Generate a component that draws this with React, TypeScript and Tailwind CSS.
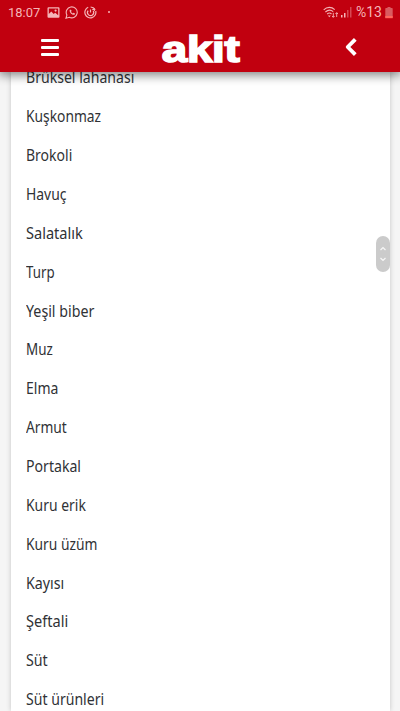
const items = [
  { label: "Brüksel lahanası", scale: "scale-x-[0.88]" },
  { label: "Kuşkonmaz", scale: "scale-x-[0.862]" },
  { label: "Brokoli", scale: "scale-x-[0.875]" },
  { label: "Havuç", scale: "scale-x-[0.87]" },
  { label: "Salatalık", scale: "scale-x-[0.91]" },
  { label: "Turp", scale: "scale-x-[0.83]" },
  { label: "Yeşil biber", scale: "scale-x-[0.89]" },
  { label: "Muz", scale: "scale-x-[0.84]" },
  { label: "Elma", scale: "scale-x-[0.875]" },
  { label: "Armut", scale: "scale-x-[0.86]" },
  { label: "Portakal", scale: "scale-x-[0.882]" },
  { label: "Kuru erik", scale: "scale-x-[0.87]" },
  { label: "Kuru üzüm", scale: "scale-x-[0.864]" },
  { label: "Kayısı", scale: "scale-x-[0.89]" },
  { label: "Şeftali", scale: "scale-x-[0.91]" },
  { label: "Süt", scale: "scale-x-[0.89]" },
  { label: "Süt ürünleri", scale: "scale-x-[0.88]" },
];

function LeftStatus() {
  return (
    <div className="flex h-6 items-center text-[#f5b5b8]">
      <span className="w-[39px] font-['Roboto',sans-serif] text-[13.5px] leading-6 whitespace-nowrap"><span className="inline-block origin-left scale-x-[0.96]">18:07</span></span>
      {/* gallery */}
      <svg className="h-[13px] w-[13px]" viewBox="0 0 13 13">
        <path fillRule="evenodd" fill="currentColor" d="M1.5 1.300h10q1 0 1 1v8.400q0 1-1 1h-10q-1 0-1-1V2.300q0-1 1-1ZM1.800 2.500v5.500l2.500-2.400L6.700 8l1.500-1.300 3 2.600V2.500ZM8.600 3.500a1.100 1.100 0 1 1 0 2.200 1.100 1.100 0 0 1 0-2.200Z" />
      </svg>
      {/* WhatsApp */}
      <svg className="ml-[5px] h-[13px] w-[14px]" viewBox="0 0 14 13" fill="none" stroke="currentColor">
        <path d="M1 12.200 1.900 9A5.500 5.500 0 1 1 4.300 11.300Z" strokeWidth="1.1" />
        <path d="M4.900 3.700c-1.300 1.800 2.200 5.800 4.400 5 .8-.4.8-1 .6-1.300L8.600 6.800l-.8.8C6.900 7.200 6.300 6.500 6 5.800l.6-.8L6 3.700Z" fill="currentColor" stroke="none" />
      </svg>
      {/* call history */}
      <svg className="ml-[5px] h-[13px] w-[13px]" viewBox="0 0 13 13" fill="none" stroke="currentColor" strokeWidth="1.2">
        <path d="M4.200 1.300A5.500 5.500 0 1 0 11.700 5M6.600 1a5.500 5.500 0 0 1 4.600 2.700" />
        <path d="M4.100 4.600a3.100 3.100 0 1 0 5.200.4M6.500 3.500v3M8.300 3.600l2-.6v2" />
      </svg>
      <span className="ml-[11px] h-[2px] w-[2px] rounded-full bg-current" />
    </div>
  );
}

function RightStatus() {
  return (
    <div className="flex h-6 items-center text-[#f5b5b8]">
      <svg className="h-[13px] w-[16px]" viewBox="0 0 16 13" fill="none" stroke="currentColor" strokeWidth="1.1">
        <path d="M.7 3.800C4 .6 8.500.6 11.700 3.600M2.400 6C5 3.700 8 3.700 10.200 5.700M4.200 8c1.400-1.200 3-1.200 4.300 0" />
        <path d="m6.300 11.200-1.500-1.700h3Z" fill="currentColor" stroke="none" />
        <path d="M10.300 6.800v4.500M9 10l1.300 1.300L11.600 10M13.700 11V6.700M12.400 8l1.300-1.300L15 8" strokeWidth=".9" />
      </svg>
      <svg className="ml-[2px] h-[12px] w-[11px]" viewBox="0 0 11 12" fill="currentColor">
        <path d="M0 9h1.500v2.500H0ZM3 7h1.500v4.500H3Z" />
        <path d="M6 4h1.500v7.500H6ZM9 1h1.500v10.500H9Z" opacity=".4" />
      </svg>
      <span className="ml-[4px] w-[29px] font-['Roboto',sans-serif] text-[14px] leading-6 whitespace-nowrap">%13</span>
      <svg className="h-[13px] w-[8px]" viewBox="0 0 8 13">
        <path d="M2.500 1h3v1H7q.7 0 .7.7v9.100H.3V2.700Q.3 2 1 2h1.500Z" fill="#d95b60" />
        <path d="M.3 10h7.400v2.200H.3Z" fill="#ff665c" />
      </svg>
    </div>
  );
}

export default function App() {
  return (
    <div className="relative flex h-[711px] w-[400px] flex-col overflow-hidden bg-[#f5f5f5]">
      <header className="z-10 flex h-[72px] shrink-0 flex-col bg-[#c1000f] shadow-[0_2px_10px_1px_rgba(0,0,0,0.5)]">
        <div className="flex justify-between pr-[7px] pl-[8px]">
          <LeftStatus />
          <RightStatus />
        </div>
        <div className="flex h-12 items-center justify-between pr-[43px] pl-[41px]">
          <button aria-label="Menu" className="mb-[2px] flex w-[18px] flex-col gap-[4px]">
            <span className="h-[3px] rounded-[1px] bg-white" />
            <span className="h-[3px] rounded-[1px] bg-white" />
            <span className="h-[3px] rounded-[1px] bg-white" />
          </button>
          <div className="mr-[3px] flex h-12 w-[80px] items-center justify-center">
            <span className="mt-[3px] scale-x-[1.27] font-['Liberation_Sans',sans-serif] text-[36px] leading-[48px] font-bold tracking-[-0.2px] text-white [-webkit-text-stroke:1.6px_white]">akit</span>
          </div>
          <button aria-label="Geri" className="mb-[2px]">
            <svg className="h-[20px] w-[12px]" viewBox="0 0 12 20" fill="none" stroke="white" strokeWidth="3.8" strokeLinejoin="round">
              <path d="m10.300 2.300-7.600 7.700 7.600 7.700" />
            </svg>
          </button>
        </div>
      </header>
      <main className="mr-[10px] ml-[11px] min-h-0 flex-1 bg-white pl-[14.5px] shadow-[0_0_5px_rgba(0,0,0,0.2)]">
        <ul className="-mt-[14px]">
          {items.map((item) => (
            <li key={item.label} className="flex h-[38.87px] items-center font-['Noto_Sans',sans-serif] text-[16px] text-[#303236]">
              <span className={`origin-left whitespace-nowrap ${item.scale}`}>{item.label}</span>
            </li>
          ))}
        </ul>
      </main>
      <div className="absolute top-[236px] left-[376px] flex h-[36px] w-[14px] flex-col items-center justify-center rounded-full bg-[#cbcbcb]">
        <svg className="h-[18px] w-[8px]" viewBox="0 0 8 18" fill="none" stroke="#f7f7f7" strokeWidth="1.2">
          <path d="m1.500 5 2.500-2.500L6.500 5M1.500 13 4 15.500 6.500 13" />
        </svg>
      </div>
    </div>
  );
}
